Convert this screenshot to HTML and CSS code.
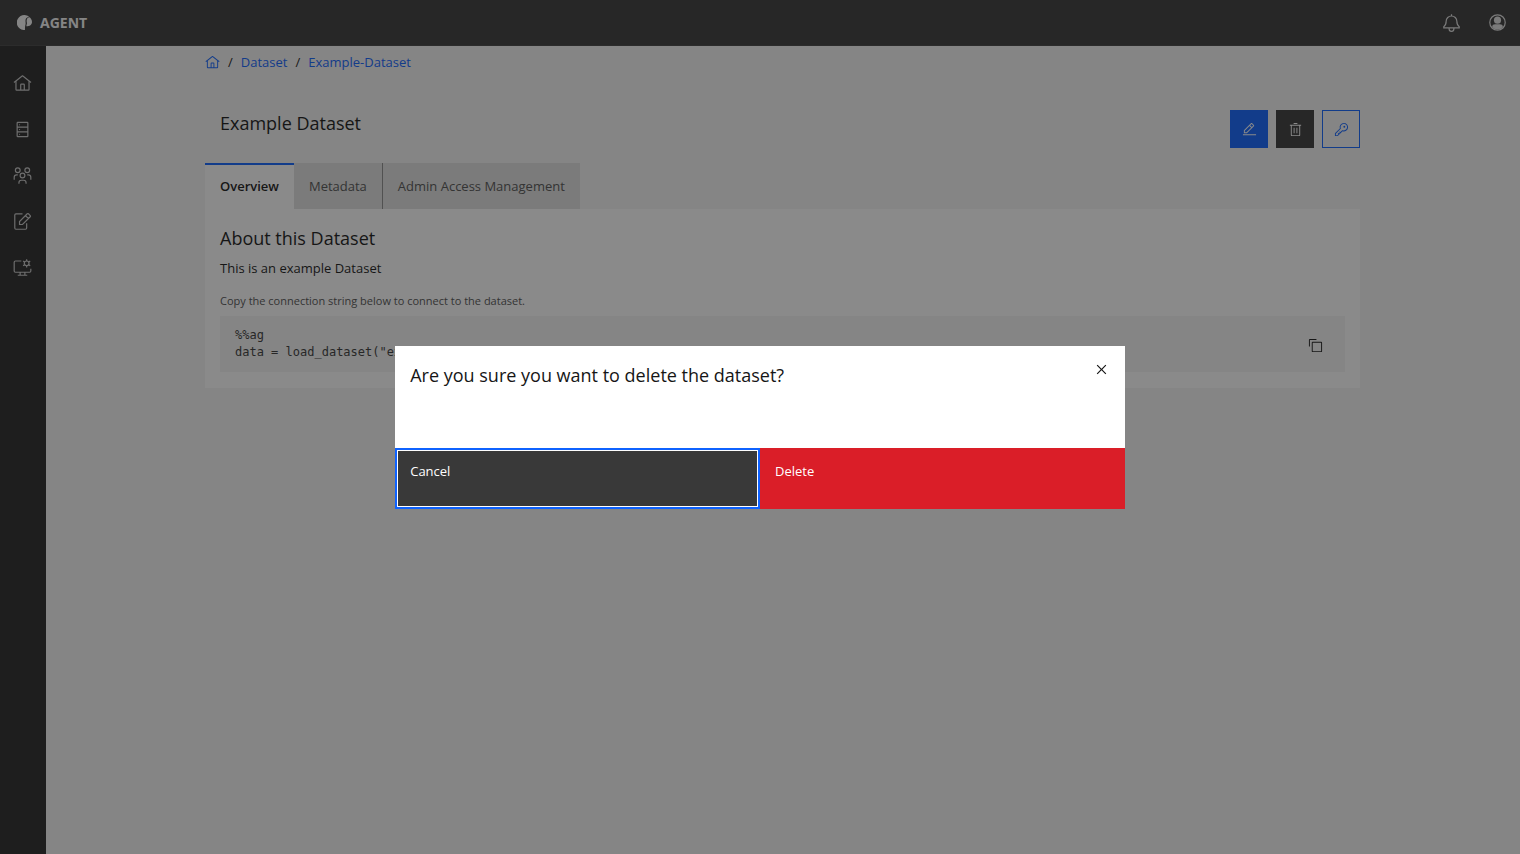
FILE: index.html
```
<!DOCTYPE html>
<html lang="en">
<head>
    <meta charset="UTF-8">
    <meta name="viewport" content="width=device-width, initial-scale=1.0">
    <title>Example Dataset</title>
    <link rel="stylesheet" href="styles.css">
</head>
<body>
    <header class="header">
        <a class="brand" href="#">
            <svg class="logo" viewBox="0 0 32 32"><path d="M17 32A16 16 0 1 1 26 4c-5 0-8 3-8 8 0 3 1 5 0 9-1 3-1 7-1 11z"/><path d="M27 5c3 3 5 6 5 10 0 6-5 9-12 9 0-4 2-5 1-8-1-6 0-10 6-11z"/></svg>
            AGENT
        </a>
        <div class="header-actions">
            <button class="icon-btn" aria-label="Notifications">
                <svg class="icon" viewBox="0 0 32 32"><path class="line" d="M16 2v3M3 25v-2c3-2 4-4 4-9a9 9 0 0 1 18 0c0 5 1 7 4 9v2zM12 25v2a4 4 0 0 0 8 0v-2"/></svg>
            </button>
            <button class="icon-btn" aria-label="Account">
                <svg class="icon" viewBox="0 0 32 32"><circle class="line" cx="16" cy="16" r="13"/><circle cx="16" cy="12" r="6"/><path d="M7 24c0-4 2-5 5-5h8c3 0 5 1 5 5a12 12 0 0 1-18 0z"/></svg>
            </button>
        </div>
    </header>

    <div class="layout">
        <nav class="sidebar" aria-label="Main">
            <a class="side-link" href="#" aria-label="Home">
                <svg class="icon" viewBox="0 0 32 32"><path d="M16.6 2.2a1 1 0 0 0-1.2 0L1 13.4 2.2 15 4 13.6V26a2 2 0 0 0 2 2h20a2 2 0 0 0 2-2V13.6L29.8 15 31 13.4zM18 26h-4v-8h4zm2 0v-8a2 2 0 0 0-2-2h-4a2 2 0 0 0-2 2v8H6V12l10-7.7L26 12v14z"/></svg>
            </a>
            <a class="side-link" href="#" aria-label="Datasets">
                <svg class="icon" viewBox="0 0 32 32"><path d="M24 3H8a2 2 0 0 0-2 2v22a2 2 0 0 0 2 2h16a2 2 0 0 0 2-2V5a2 2 0 0 0-2-2zm0 2v6H8V5zM8 19v-6h16v6zm0 8v-6h16v6z"/><circle cx="11" cy="8" r="1"/><circle cx="11" cy="16" r="1"/><circle cx="11" cy="24" r="1"/></svg>
            </a>
            <a class="side-link" href="#" aria-label="Groups">
                <svg class="icon" viewBox="0 0 32 32"><path d="M26 14h-2v2h2a3 3 0 0 1 3 3v4h2v-4a5 5 0 0 0-5-5zM24 4a3 3 0 1 1-3 3 3 3 0 0 1 3-3m0-2a5 5 0 1 0 5 5 5 5 0 0 0-5-5zM23 30h-2v-2a3 3 0 0 0-3-3h-4a3 3 0 0 0-3 3v2H9v-2a5 5 0 0 1 5-5h4a5 5 0 0 1 5 5zM16 13a3 3 0 1 1-3 3 3 3 0 0 1 3-3m0-2a5 5 0 1 0 5 5 5 5 0 0 0-5-5zM8 14H6a5 5 0 0 0-5 5v4h2v-4a3 3 0 0 1 3-3h2zM8 4a3 3 0 1 1-3 3 3 3 0 0 1 3-3m0-2a5 5 0 1 0 5 5 5 5 0 0 0-5-5z"/></svg>
            </a>
            <a class="side-link" href="#" aria-label="Requests">
                <svg class="icon" viewBox="0 0 32 32"><path class="line" d="M16 3H5a2 2 0 0 0-2 2v22a2 2 0 0 0 2 2h16a2 2 0 0 0 2-2v-8M11 21v-5L24 3q1-1 2 0l3 3q1 1 0 2L16 21zM21 6l5 5"/></svg>
            </a>
            <a class="side-link" href="#" aria-label="Administration">
                <svg class="icon" viewBox="0 0 32 32"><path class="line" d="M14 5H4a2 2 0 0 0-2 2v15a2 2 0 0 0 2 2h24a2 2 0 0 0 2-2v-4M12 24v5M20 24v5M8 29h16"/><circle class="line" cx="23" cy="9" r="4"/><path class="line" d="M23 2v3M23 13v3M17 5l3 2M26 11l3 2M17 13l3-2M26 7l3-2"/></svg>
            </a>
        </nav>

        <main class="content">
            <nav class="breadcrumb" aria-label="Breadcrumb">
                <a href="#" aria-label="Home"><svg class="icon-small" viewBox="0 0 32 32"><path d="M16.6 2.2a1 1 0 0 0-1.2 0L1 13.4 2.2 15 4 13.6V26a2 2 0 0 0 2 2h20a2 2 0 0 0 2-2V13.6L29.8 15 31 13.4zM18 26h-4v-8h4zm2 0v-8a2 2 0 0 0-2-2h-4a2 2 0 0 0-2 2v8H6V12l10-7.7L26 12v14z"/></svg></a>
                <span>/</span>
                <a href="#">Dataset</a>
                <span>/</span>
                <a href="#">Example-Dataset</a>
            </nav>

            <div class="title-row">
                <h1>Example Dataset</h1>
                <div class="actions">
                    <button class="action primary" aria-label="Edit">
                        <svg class="icon-small" viewBox="0 0 32 32"><path d="M2 26h28v2H2zM25.4 9c.8-.8.8-2 0-2.8l-3.6-3.6c-.8-.8-2-.8-2.8 0l-15 15V24h6.4l15-15zm-5-5L24 7.6l-3 3L17.4 7l3-3zM6 22v-3.6l10-10 3.6 3.6-10 10H6z"/></svg>
                    </button>
                    <button class="action secondary" aria-label="Delete dataset">
                        <svg class="icon-small" viewBox="0 0 32 32"><path d="M12 12h2v12h-2zM18 12h2v12h-2zM4 6v2h2v20a2 2 0 0 0 2 2h16a2 2 0 0 0 2-2V8h2V6zm4 22V8h16v20zM12 2h8v2h-8z"/></svg>
                    </button>
                    <button class="action tertiary" aria-label="Access">
                        <svg class="icon-small" viewBox="0 0 32 32"><path d="M21 2a9 9 0 0 0-8.6 11.6L2 24v6h6l10.4-10.4A9 9 0 1 0 21 2zm0 16a7 7 0 0 1-2-.3l-1.2-.3-.8.8-3.2 3.2-1.4-1.4-1.4 1.4 1.4 1.4-1.6 1.6L9.4 23 8 24.4l1.4 1.4L7.2 28H4v-3.2l9.8-9.8.8-.8-.3-1.2A7 7 0 1 1 21 18z"/><circle cx="22" cy="10" r="2"/></svg>
                    </button>
                </div>
            </div>

            <div class="tabs" role="tablist">
                <button class="tab selected" role="tab" aria-selected="true">Overview</button>
                <button class="tab" role="tab" aria-selected="false">Metadata</button>
                <button class="tab" role="tab" aria-selected="false">Admin Access Management</button>
            </div>

            <section class="panel">
                <h2>About this Dataset</h2>
                <p class="description">This is an example Dataset</p>
                <p class="hint">Copy the connection string below to connect to the dataset.</p>
                <div class="snippet">
                    <pre>%%ag
data = load_dataset("example-dataset")</pre>
                    <button class="copy-btn" aria-label="Copy">
                        <svg class="icon-small" viewBox="0 0 32 32"><path d="M28 10v18H10V10h18m0-2H10a2 2 0 0 0-2 2v18a2 2 0 0 0 2 2h18a2 2 0 0 0 2-2V10a2 2 0 0 0-2-2zM4 18H2V4a2 2 0 0 1 2-2h14v2H4z"/></svg>
                    </button>
                </div>
            </section>
        </main>
    </div>

    <div class="overlay">
        <div class="modal" role="dialog" aria-modal="true" aria-labelledby="modal-title">
            <div class="modal-header">
                <h2 id="modal-title">Are you sure you want to delete the dataset?</h2>
                <button class="close-btn" aria-label="Close">
                    <svg class="icon" viewBox="0 0 32 32"><path d="M24 9.4L22.6 8 16 14.6 9.4 8 8 9.4l6.6 6.6L8 22.6 9.4 24l6.6-6.6 6.6 6.6 1.4-1.4-6.6-6.6z"/></svg>
                </button>
            </div>
            <div class="modal-footer">
                <button class="modal-btn cancel">Cancel</button>
                <button class="modal-btn danger">Delete</button>
            </div>
        </div>
    </div>
</body>
</html>
```
FILE: styles.css
```
* {
    box-sizing: border-box;
}

body {
    margin: 0;
    min-height: 100vh;
    display: flex;
    flex-direction: column;
    font-family: "Open Sans", "Noto Sans", sans-serif;
    font-size: 13px;
    line-height: 18px;
    color: #161616;
    background-color: #f4f4f4;
}

h1, h2, p, pre {
    margin: 0;
}

h1, h2 {
    font-size: 18px;
    line-height: 26px;
    font-weight: 400;
}

a {
    color: #0f62fe;
    text-decoration: none;
}

button {
    font: inherit;
    color: inherit;
    background: none;
    border: none;
    padding: 0;
    cursor: pointer;
}

svg {
    display: block;
    fill: currentColor;
}

.line {
    fill: none;
    stroke: currentColor;
    stroke-width: 2;
}

.icon {
    width: 19px;
    height: 19px;
}

.icon-small {
    width: 15px;
    height: 15px;
}

/* Header */
.header {
    display: flex;
    justify-content: space-between;
    height: 46px;
    background-color: #393939;
    border-bottom: 1px solid #424242;
}

.brand {
    display: flex;
    align-items: center;
    gap: 8px;
    padding-left: 17px;
    color: #f4f4f4;
    font-size: 14px;
    font-weight: 700;
}

.logo {
    width: 15px;
    height: 15px;
}

.header-actions {
    display: flex;
}

.icon-btn {
    display: flex;
    align-items: center;
    justify-content: center;
    width: 46px;
    color: #e0e0e0;
}

/* Sidebar */
.layout {
    flex: 1;
    display: flex;
}

.sidebar {
    width: 46px;
    padding-top: 14px;
    background-color: #262626;
}

.side-link {
    display: flex;
    align-items: center;
    justify-content: center;
    height: 46px;
    padding-right: 1px;
    color: #c6c6c6;
}

/* Content */
.content {
    flex: 1;
    padding: 7px 160px 0 159px;
}

.breadcrumb {
    display: flex;
    align-items: center;
    gap: 8px;
}

.title-row {
    display: flex;
    align-items: flex-start;
    justify-content: space-between;
    padding: 39px 0 15px 15px;
}

.actions {
    display: flex;
    gap: 8px;
}

.action {
    display: flex;
    align-items: center;
    justify-content: center;
    width: 38px;
    height: 38px;
    color: #ffffff;
}

.primary {
    background-color: #0f62fe;
}

.secondary {
    background-color: #393939;
}

.tertiary {
    color: #0f62fe;
    border: 1px solid #0f62fe;
}

.tabs {
    display: flex;
}

.tab {
    height: 46px;
    padding: 0 15px;
    color: #525252;
    background-color: #e0e0e0;
}

.tab + .tab + .tab {
    border-left: 1px solid #8d8d8d;
}

.tab.selected {
    color: #161616;
    font-weight: 600;
    background-color: #ffffff;
    box-shadow: inset 0 2px #0f62fe;
}

.panel {
    padding: 16px 15px;
    background-color: #ffffff;
}

.description {
    padding-top: 8px;
}

.hint {
    padding: 15px 0 6px;
    font-size: 11px;
    color: #525252;
}

.snippet {
    display: flex;
    align-items: center;
    justify-content: space-between;
    padding: 11px 22px 11px 15px;
    color: #393939;
    background-color: #f4f4f4;
}

.snippet pre {
    font-family: "DejaVu Sans Mono", monospace;
    font-size: 12px;
    line-height: 17px;
}

.copy-btn {
    padding-top: 2px;
    color: #161616;
}

/* Delete dialog */
.overlay {
    position: fixed;
    inset: 0;
    display: flex;
    align-items: center;
    justify-content: center;
    padding-top: 1px;
    background-color: rgba(22, 22, 22, 0.5);
}

.modal {
    width: 48%;
    background-color: #ffffff;
}

.modal-header {
    display: flex;
    justify-content: space-between;
    padding: 16px 0 60px 15px;
}

.close-btn {
    display: flex;
    align-items: center;
    justify-content: center;
    width: 46px;
    height: 15px;
}

.modal-footer {
    display: flex;
}

.modal-btn {
    flex: 1;
    height: 61px;
    padding: 14px 15px 29px;
    text-align: left;
    color: #ffffff;
}

.cancel {
    padding: 12px 13px 27px;
    background-color: #393939;
    border: 2px solid #0f62fe;
    box-shadow: inset 0 0 0 1px #ffffff;
}

.danger {
    background-color: #da1e28;
}
```
